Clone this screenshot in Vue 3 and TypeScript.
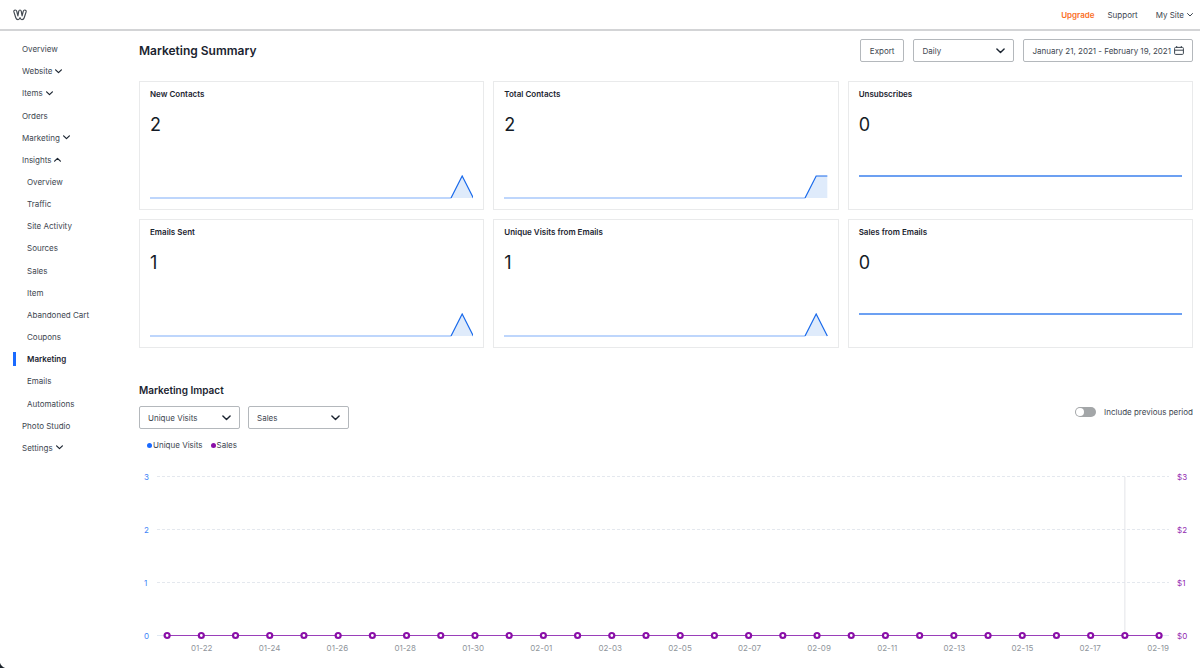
<script setup lang="ts">
import { ref } from 'vue'

interface NavItem {
  label: string
  child?: boolean
  arrow?: 'down' | 'up'
  active?: boolean
}

const nav: NavItem[] = [
  { label: 'Overview' },
  { label: 'Website', arrow: 'down' },
  { label: 'Items', arrow: 'down' },
  { label: 'Orders' },
  { label: 'Marketing', arrow: 'down' },
  { label: 'Insights', arrow: 'up' },
  { label: 'Overview', child: true },
  { label: 'Traffic', child: true },
  { label: 'Site Activity', child: true },
  { label: 'Sources', child: true },
  { label: 'Sales', child: true },
  { label: 'Item', child: true },
  { label: 'Abandoned Cart', child: true },
  { label: 'Coupons', child: true },
  { label: 'Marketing', child: true, active: true },
  { label: 'Emails', child: true },
  { label: 'Automations', child: true },
  { label: 'Photo Studio' },
  { label: 'Settings', arrow: 'down' },
]

interface Card {
  title: string
  value: number
  tail: number[] | null
}

// tail holds the last three daily values on a 0-1 scale; null is a flat series
const cards: Card[] = [
  { title: 'New Contacts', value: 2, tail: [0, 1, 0] },
  { title: 'Total Contacts', value: 2, tail: [0, 1, 1] },
  { title: 'Unsubscribes', value: 0, tail: null },
  { title: 'Emails Sent', value: 1, tail: [0, 1, 0] },
  { title: 'Unique Visits from Emails', value: 1, tail: [0, 1, 0] },
  { title: 'Sales from Emails', value: 0, tail: null },
]

const sparkPoints = (tail: number[]) =>
  tail.map((v, i) => `${27 + i},${23 - v * 22}`).join(' ')

const DAYS = 30
const ticks = [3, 2, 1, 0]
const PLOT_START = 1
const PLOT_STEP = 3.38
const dayX = (i: number) => PLOT_START + i * PLOT_STEP

const dayLabel = (i: number) => {
  const d = new Date(Date.UTC(2021, 0, 21 + i))
  const pad = (n: number) => String(n).padStart(2, '0')
  return `${pad(d.getUTCMonth() + 1)}-${pad(d.getUTCDate())}`
}
const days = Array.from({ length: DAYS }, (_, i) => ({ x: dayX(i), label: dayLabel(i), labelled: i % 2 === 1 }))

const interval = ref('Daily')
const metricA = ref('Unique Visits')
const metricB = ref('Sales')
const previous = ref(false)
</script>

<template>
  <div class="page">
    <header class="topbar">
      <a href="#" class="logo" aria-label="Home">
        <svg width="14" height="12" viewBox="0 0 14 12">
          <path
            d="M2.3 1C1.2 1 .6 1.9.9 2.9L2.8 8.7C3.2 10 4 10.6 5 10.6 6 10.6 6.6 10 7 8.6 7.4 10 8 10.6 9 10.6 10 10.6 10.8 10 11.2 8.7L13.1 2.9C13.4 1.9 12.8 1 11.7 1 11 1 10.5 1.4 10.3 2.1L9.1 6.8 8.3 2.3C8.1 1.4 7.6 1 7 1 6.4 1 5.9 1.4 5.7 2.3L4.9 6.8 3.7 2.1C3.5 1.4 3 1 2.3 1Z"
          />
        </svg>
      </a>
      <nav class="account">
        <a href="#" class="upgrade">Upgrade</a>
        <a href="#">Support</a>
        <a href="#" class="site">My Site
          <svg class="chev" width="6" height="4" viewBox="0 0 6 4"><path d="M.5.5 3 3 5.5.5" /></svg>
        </a>
      </nav>
    </header>

    <div class="body">
      <nav class="sidebar">
        <ul>
          <li v-for="(item, i) in nav" :key="i" :class="{ child: item.child, active: item.active }">
            <a href="#">{{ item.label }}
              <svg v-if="item.arrow" class="chev bold" :class="item.arrow" width="7" height="5" viewBox="0 0 7 5">
                <path d="M.6.8 3.5 3.7 6.4.8" />
              </svg>
            </a>
          </li>
        </ul>
      </nav>

      <main>
        <section class="heading">
          <h1>Marketing Summary</h1>
          <div class="tools">
            <button type="button" class="control export">Export</button>
            <span class="picker">
              <select v-model="interval" class="control" aria-label="Interval">
                <option>Daily</option>
                <option>Weekly</option>
                <option>Monthly</option>
              </select>
              <svg class="chev big" width="9" height="6" viewBox="0 0 9 6"><path d="M.9.9 4.5 4.5 8.1.9" /></svg>
            </span>
            <button type="button" class="control dates">
              January 21, 2021 - February 19, 2021
              <svg width="10" height="9" viewBox="0 0 10 9">
                <rect x=".6" y="1.4" width="8.8" height="7" rx="1" />
                <path d="M.6 4.2H9.4M2.7 0V2M7.3 0V2" />
              </svg>
            </button>
          </div>
        </section>

        <section class="cards">
          <article v-for="card in cards" :key="card.title" class="card">
            <h3>{{ card.title }}</h3>
            <p>{{ card.value }}</p>
            <svg class="spark" viewBox="0 0 29 24" preserveAspectRatio="none">
              <template v-if="card.tail">
                <polygon class="fill" :points="`27,23 ${sparkPoints(card.tail)} 29,23`" />
                <path class="base" d="M0 23H27" />
                <polyline class="line" :points="sparkPoints(card.tail)" />
              </template>
              <path v-else class="flat" d="M0 1H29" />
            </svg>
          </article>
        </section>

        <section class="impact">
          <h2>Marketing Impact</h2>
          <div class="filters">
            <span class="picker">
              <select v-model="metricA" class="control" aria-label="First metric">
                <option>Unique Visits</option>
                <option>Page Views</option>
              </select>
              <svg class="chev big" width="9" height="6" viewBox="0 0 9 6"><path d="M.9.9 4.5 4.5 8.1.9" /></svg>
            </span>
            <span class="picker">
              <select v-model="metricB" class="control" aria-label="Second metric">
                <option>Sales</option>
                <option>Orders</option>
              </select>
              <svg class="chev big" width="9" height="6" viewBox="0 0 9 6"><path d="M.9.9 4.5 4.5 8.1.9" /></svg>
            </span>
            <label class="switch">
              <input v-model="previous" type="checkbox" role="switch" />
              Include previous period
            </label>
          </div>

          <ul class="legend">
            <li class="visits">Unique Visits</li>
            <li class="sales">Sales</li>
          </ul>

          <div class="chart">
            <div class="axis left">
              <span v-for="t in ticks" :key="t">{{ t }}</span>
            </div>
            <svg class="plot" width="100%" height="170">
              <line v-for="n in 3" :key="n" class="grid" x1="0" x2="100%" :y1="n * 53 - 47.5" :y2="n * 53 - 47.5" />
              <line class="zero" x1="0" x2="100%" y1="164.5" y2="164.5" />
              <line class="cursor" :x1="dayX(28) + '%'" :x2="dayX(28) + '%'" y1="6" y2="164" />
              <line class="series" :x1="dayX(0) + '%'" :x2="dayX(29) + '%'" y1="164.5" y2="164.5" />
              <circle v-for="d in days" :key="d.label" :cx="d.x + '%'" cy="164.5" r="2.5" />
            </svg>
            <div class="axis right">
              <span v-for="t in ticks" :key="t">${{ t }}</span>
            </div>
            <div class="labels">
              <template v-for="d in days" :key="d.label">
                <span v-if="d.labelled">{{ d.label }}</span>
              </template>
            </div>
          </div>
        </section>
      </main>
    </div>
  </div>
</template>

<style>
body {
  margin: 0;
  background: #fff;
}
</style>

<style scoped>
.page {
  position: relative;
  min-height: 100vh;
  overflow: hidden;
  box-sizing: border-box;
  font: 8px/12px Inter, "Liberation Sans", sans-serif;
  color: #3d4650;
}
.page::after {
  content: '';
  position: absolute;
  left: 0;
  bottom: 0;
  width: 8px;
  height: 8px;
  background: radial-gradient(circle at 100% 0, transparent 8px, #1d242c 9px);
}
a {
  color: inherit;
  text-decoration: none;
}
svg {
  fill: none;
  stroke: currentColor;
}
h1, h2, h3, p, ul {
  margin: 0;
  padding: 0;
}
ul {
  list-style: none;
}
h1, h2, h3 {
  font-weight: 600;
  color: #1b2430;
}
.topbar {
  display: flex;
  align-items: center;
  justify-content: space-between;
  height: 29px;
  padding: 0 7px 0 13px;
  border-bottom: 2px solid #d3d4d6;
}
.logo {
  display: flex;
  color: #444b53;
}
.logo path {
  stroke-width: 1.2;
  stroke-linejoin: round;
}
.account {
  display: flex;
  gap: 13px;
}
.upgrade {
  color: #fa6e1e;
  font-weight: 600;
}
.site {
  display: flex;
  align-items: center;
  gap: 3px;
  margin-left: 5px;
}
.chev {
  stroke-linecap: round;
  stroke-linejoin: round;
}
.chev.bold {
  stroke-width: 1.2;
  color: #1b2430;
}
.chev.up {
  transform: rotate(180deg);
}
.chev.big {
  stroke-width: 1.4;
  color: #1b2430;
}
.body {
  display: flex;
}
.sidebar {
  flex: 0 0 139px;
  padding-top: 7px;
}
.sidebar ul {
  display: grid;
  grid-auto-rows: 1fr;
  height: 421px;
}
.sidebar li {
  display: flex;
  align-items: center;
  padding-left: 22px;
}
.sidebar li.child {
  padding-left: 27px;
}
.sidebar li.child.active {
  padding-left: 13px;
  font-weight: 600;
  color: #1b2430;
}
.active a {
  border-left: 3px solid #1a6aff;
  padding-left: 11px;
  line-height: 14px;
}
.sidebar a {
  display: flex;
  align-items: center;
  gap: 3px;
}
main {
  flex: 1;
  min-width: 0;
  padding: 8px 7px 0 0;
}
.heading {
  display: flex;
  align-items: center;
  justify-content: space-between;
  margin-bottom: 19px;
}
h1 {
  font-size: 12px;
  line-height: 18px;
}
.tools {
  display: flex;
  gap: 9px;
}
.control {
  box-sizing: border-box;
  height: 23px;
  margin: 0;
  padding: 0 8px;
  border: 1px solid #b4b8bc;
  border-radius: 2px;
  background: #fff;
  font: inherit;
  color: #3d4650;
  appearance: none;
}
.export {
  padding: 0 9px;
}
.dates {
  display: flex;
  align-items: center;
  gap: 3px;
}
.picker {
  display: grid;
  align-items: center;
}
.picker > * {
  grid-area: 1 / 1;
}
.picker select {
  width: 101px;
}
.picker svg {
  justify-self: end;
  margin-right: 9px;
  pointer-events: none;
}
.cards {
  display: grid;
  grid-template-columns: repeat(3, 1fr);
  gap: 9px;
}
.card {
  display: flex;
  flex-direction: column;
  min-width: 0;
  padding: 6px 10px 10px;
  border: 1px solid #e9eaeb;
}
.card h3 {
  font-size: 8px;
  line-height: 12px;
}
.card p {
  margin: 13px 0 38px;
  font-size: 18px;
  line-height: 24px;
  color: #141b26;
}
.spark {
  display: block;
  width: 100%;
  height: 24px;
}
.spark * {
  vector-effect: non-scaling-stroke;
}
.fill {
  fill: #dfebfb;
  stroke: none;
}
.base {
  stroke: #a8c9fb;
  stroke-width: 1.5;
}
.line {
  stroke: #1a6aeb;
  stroke-width: 1.2;
}
.flat {
  stroke: #3b80ee;
  stroke-width: 1.5;
}
.impact {
  padding-top: 34px;
}
h2 {
  font-size: 10px;
  line-height: 16px;
}
.filters {
  display: flex;
  gap: 8px;
  margin-top: 8px;
}
.switch {
  display: flex;
  align-items: center;
  align-self: flex-start;
  gap: 8px;
  margin-left: auto;
}
.switch input {
  display: flex;
  align-items: center;
  box-sizing: border-box;
  width: 21px;
  height: 10px;
  margin: 0;
  padding: 1px;
  border-radius: 5px;
  background: #a3a6a8;
  appearance: none;
}
.switch input::before {
  content: '';
  width: 8px;
  height: 8px;
  border-radius: 50%;
  background: #fff;
}
.switch input:checked {
  justify-content: flex-end;
  background: #1a6aff;
}
.legend {
  display: flex;
  gap: 8px;
  margin-top: 10px;
  padding-left: 8px;
}
.legend li {
  display: flex;
  align-items: center;
  gap: 1px;
}
.legend li::before {
  content: '';
  width: 5px;
  height: 5px;
  border-radius: 50%;
}
.visits::before {
  background: #1a6aff;
}
.sales::before {
  background: #8a0fa8;
}
.chart {
  display: grid;
  grid-template-columns: 18px 1fr 24px;
  margin-top: 20px;
}
.axis {
  display: flex;
  flex-direction: column;
  gap: 41px;
}
.left {
  padding-left: 5px;
  color: #3d84f7;
}
.right {
  padding-left: 8px;
  color: #9129b0;
}
.plot {
  display: block;
}
.plot .grid {
  stroke: #e4e8ee;
  stroke-dasharray: 3 2;
}
.plot .zero {
  stroke: #dfe8f2;
}
.plot .cursor {
  stroke: #e3e4e8;
}
.plot .series {
  stroke: #9a3fba;
}
.plot circle {
  fill: #fff;
  stroke: #8a0fa8;
  stroke-width: 2.2;
}
.labels {
  display: flex;
  justify-content: space-between;
  grid-column: 2;
  margin: 0 0 0 34px;
  color: #8f959b;
}
</style>
